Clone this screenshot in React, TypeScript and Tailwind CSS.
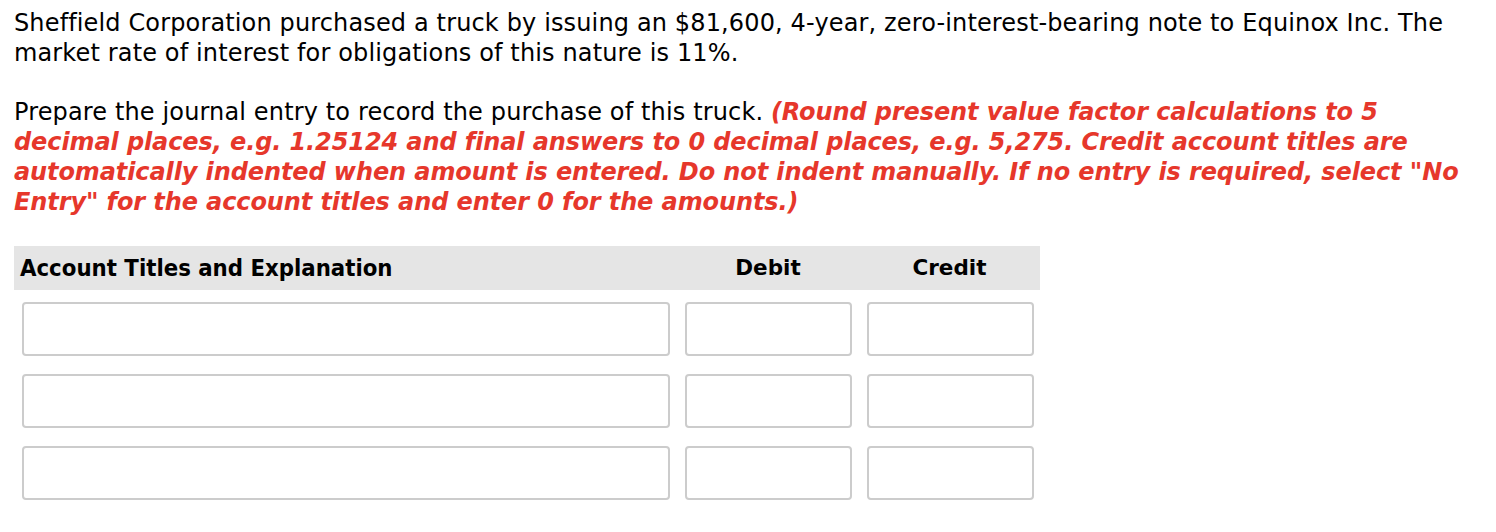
import React from "react";

const Row = () => (
  <div className="flex h-[72px] pl-[8px] pt-[12px]">
    <div className="h-[54px] w-[648px] rounded-[4px] border-2 border-[#cccccc] bg-white" />
    <div className="ml-[15px] h-[54px] w-[167px] rounded-[4px] border-2 border-[#cccccc] bg-white" />
    <div className="ml-[15px] h-[54px] w-[167px] rounded-[4px] border-2 border-[#cccccc] bg-white" />
  </div>
);

export default function App() {
  return (
    <div
      className="min-h-[532px] w-[1496px] bg-white pl-[14px] pt-[8px] text-[24px] leading-[30px] text-black"
      style={{ fontFamily: '"DejaVu Sans", Verdana, sans-serif' }}
    >
      <p className="whitespace-nowrap tracking-[0.14px]">
        Sheffield Corporation purchased a truck by issuing an $81,600, 4-year, zero-interest-bearing note to Equinox Inc. The
        <br />
        market rate of interest for obligations of this nature is 11%.
      </p>
      <p className="mt-[29px] whitespace-nowrap tracking-[0.14px]">
        Prepare the journal entry to record the purchase of this truck.{" "}
        <span className="font-bold italic tracking-[-0.1px] text-[#e6372b]">
          (Round present value factor calculations to 5
          <br />
          decimal places, e.g. 1.25124 and final answers to 0 decimal places, e.g. 5,275. Credit account titles are
          <br />
          automatically indented when amount is entered. Do not indent manually. If no entry is required, select "No
          <br />
          Entry" for the account titles and enter 0 for the amounts.)
        </span>
      </p>
      <div className="mt-[29px] w-[1026px]">
        <div className="flex h-[44px] items-center bg-[#e5e5e5] font-bold">
          <div
            className="w-[663px] pl-[6px] text-[23.7px]"
            style={{ fontFamily: '"DejaVu Sans Condensed", Tahoma, sans-serif' }}
          >
            Account Titles and Explanation
          </div>
          <div className="w-[182px] text-center text-[21.5px]">Debit</div>
          <div className="w-[181px] text-center text-[21.5px]">Credit</div>
        </div>
        <Row />
        <Row />
        <Row />
      </div>
    </div>
  );
}
